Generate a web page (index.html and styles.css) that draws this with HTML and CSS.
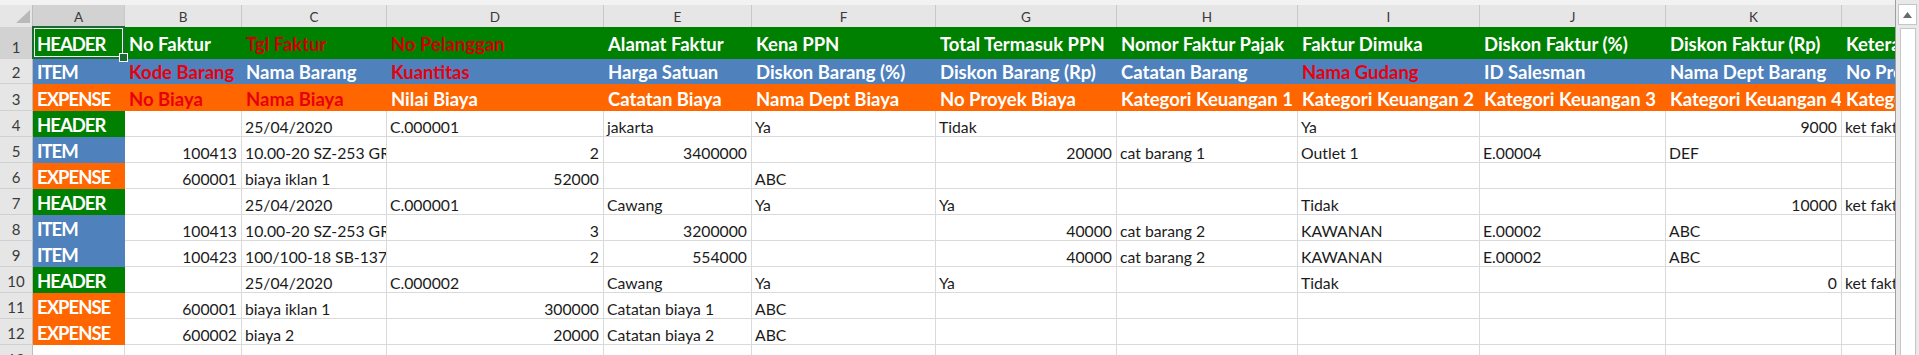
FILE: index.html
```html
<!DOCTYPE html>
<html lang="id">
<head>
<meta charset="utf-8">
<title>Sheet</title>
<link rel="stylesheet" href="styles.css">
</head>
<body>
<div class="app">
  <div class="sheet">
    <div class="strip"></div>
    <div class="row row-head">
      <div class="ch corner"><svg width="33" height="22" viewBox="0 0 33 22"><polygon points="30,4 30,17 16,17" fill="#b9b9b9"/></svg></div>
      <div class="ch ch-sel">A</div><div class="ch">B</div><div class="ch">C</div><div class="ch">D</div><div class="ch">E</div><div class="ch">F</div><div class="ch">G</div><div class="ch">H</div><div class="ch">I</div><div class="ch">J</div><div class="ch">K</div><div class="ch"></div>
    </div>

    <div class="row r1 fill fg">
      <div class="rh rh-sel">1</div>
      <div class="c sel tl">HEADER</div><div class="c">No Faktur</div><div class="c red-g">Tgl Faktur</div><div class="c red-g">No Pelanggan</div><div class="c">Alamat Faktur</div><div class="c">Kena PPN</div><div class="c">Total Termasuk PPN</div><div class="c">Nomor Faktur Pajak</div><div class="c">Faktur Dimuka</div><div class="c">Diskon Faktur (%)</div><div class="c">Diskon Faktur (Rp)</div><div class="c">Keterangan</div>
    </div>
    <div class="row r2 fill fb">
      <div class="rh">2</div>
      <div class="c tl">ITEM</div><div class="c red">Kode Barang</div><div class="c">Nama Barang</div><div class="c red">Kuantitas</div><div class="c">Harga Satuan</div><div class="c">Diskon Barang (%)</div><div class="c">Diskon Barang (Rp)</div><div class="c">Catatan Barang</div><div class="c red">Nama Gudang</div><div class="c">ID Salesman</div><div class="c">Nama Dept Barang</div><div class="c">No Proyek Barang</div>
    </div>
    <div class="row r3 fill fo">
      <div class="rh">3</div>
      <div class="c tl">EXPENSE</div><div class="c red">No Biaya</div><div class="c red">Nama Biaya</div><div class="c">Nilai Biaya</div><div class="c">Catatan Biaya</div><div class="c">Nama Dept Biaya</div><div class="c">No Proyek Biaya</div><div class="c">Kategori Keuangan 1</div><div class="c">Kategori Keuangan 2</div><div class="c">Kategori Keuangan 3</div><div class="c">Kategori Keuangan 4</div><div class="c">Kategori Keuangan 5</div>
    </div>

    <div class="row rd">
      <div class="rh">4</div>
      <div class="c a g">HEADER</div><div class="c"></div><div class="c">25/04/2020</div><div class="c">C.000001</div><div class="c">jakarta</div><div class="c">Ya</div><div class="c">Tidak</div><div class="c"></div><div class="c">Ya</div><div class="c"></div><div class="c n">9000</div><div class="c">ket faktur 1</div>
    </div>
    <div class="row rd">
      <div class="rh">5</div>
      <div class="c a b">ITEM</div><div class="c n">100413</div><div class="c">10.00-20 SZ-253 GRADE A</div><div class="c n">2</div><div class="c n">3400000</div><div class="c"></div><div class="c n">20000</div><div class="c">cat barang 1</div><div class="c">Outlet 1</div><div class="c">E.00004</div><div class="c">DEF</div><div class="c"></div>
    </div>
    <div class="row rd">
      <div class="rh">6</div>
      <div class="c a o">EXPENSE</div><div class="c n">600001</div><div class="c">biaya iklan 1</div><div class="c n">52000</div><div class="c"></div><div class="c">ABC</div><div class="c"></div><div class="c"></div><div class="c"></div><div class="c"></div><div class="c"></div><div class="c"></div>
    </div>
    <div class="row rd">
      <div class="rh">7</div>
      <div class="c a g">HEADER</div><div class="c"></div><div class="c">25/04/2020</div><div class="c">C.000001</div><div class="c">Cawang</div><div class="c">Ya</div><div class="c">Ya</div><div class="c"></div><div class="c">Tidak</div><div class="c"></div><div class="c n">10000</div><div class="c">ket faktur 2</div>
    </div>
    <div class="row rd">
      <div class="rh">8</div>
      <div class="c a b">ITEM</div><div class="c n">100413</div><div class="c">10.00-20 SZ-253 GRADE A</div><div class="c n">3</div><div class="c n">3200000</div><div class="c"></div><div class="c n">40000</div><div class="c">cat barang 2</div><div class="c">KAWANAN</div><div class="c">E.00002</div><div class="c">ABC</div><div class="c"></div>
    </div>
    <div class="row rd">
      <div class="rh">9</div>
      <div class="c a b">ITEM</div><div class="c n">100423</div><div class="c">100/100-18 SB-137 AB</div><div class="c n">2</div><div class="c n">554000</div><div class="c"></div><div class="c n">40000</div><div class="c">cat barang 2</div><div class="c">KAWANAN</div><div class="c">E.00002</div><div class="c">ABC</div><div class="c"></div>
    </div>
    <div class="row rd">
      <div class="rh">10</div>
      <div class="c a g">HEADER</div><div class="c"></div><div class="c">25/04/2020</div><div class="c">C.000002</div><div class="c">Cawang</div><div class="c">Ya</div><div class="c">Ya</div><div class="c"></div><div class="c">Tidak</div><div class="c"></div><div class="c n">0</div><div class="c">ket faktur 3</div>
    </div>
    <div class="row rd">
      <div class="rh">11</div>
      <div class="c a o">EXPENSE</div><div class="c n">600001</div><div class="c">biaya iklan 1</div><div class="c n">300000</div><div class="c">Catatan biaya 1</div><div class="c">ABC</div><div class="c"></div><div class="c"></div><div class="c"></div><div class="c"></div><div class="c"></div><div class="c"></div>
    </div>
    <div class="row rd">
      <div class="rh">12</div>
      <div class="c a o">EXPENSE</div><div class="c n">600002</div><div class="c">biaya 2</div><div class="c n">20000</div><div class="c">Catatan biaya 2</div><div class="c">ABC</div><div class="c"></div><div class="c"></div><div class="c"></div><div class="c"></div><div class="c"></div><div class="c"></div>
    </div>
    <div class="row rd">
      <div class="rh">13</div>
      <div class="c"></div><div class="c"></div><div class="c"></div><div class="c"></div><div class="c"></div><div class="c"></div><div class="c"></div><div class="c"></div><div class="c"></div><div class="c"></div><div class="c"></div><div class="c"></div>
    </div>
  </div>
  <div class="vscroll">
    <div class="up"><svg width="9" height="6" viewBox="0 0 9 6"><polygon points="4.5,0 9,6 0,6" fill="#6a6a6a"/></svg></div>
    <div class="thumb"></div>
  </div>
</div>
</body>
</html>
```
FILE: styles.css
```css
* { box-sizing: border-box; margin: 0; padding: 0; }
html, body { width: 1919px; height: 355px; overflow: hidden; background: #ffffff; }
body { font-family: Lato, "Liberation Sans", sans-serif; color: #1b1b1b; }

.app { display: flex; height: 355px; }
.sheet { width: 1895px; display: flex; flex-direction: column; overflow: hidden; flex: none; }
.strip { height: 5px; background: #f2f2f2; flex: none; }

.row {
  display: grid;
  grid-template-columns: 33px 92px 117px 145px 217px 148px 184px 181px 181px 182px 186px 176px 53px;
  flex: none;
}
.row-head { height: 22px; }
.r1 { height: 32px; }
.r2 { height: 25px; }
.r3 { height: 27px; }
.rd { height: 26px; }

/* column headers */
.ch {
  display: flex; align-items: center; justify-content: center;
  background: #e6e6e6; color: #3a3a3a;
  border-right: 1px solid #c9c9c9; border-bottom: 1px solid #ababab;
  font-size: 13.5px; line-height: 16px; padding-top: 1px;
}
.ch:last-child { border-right: none; }
.ch-sel { background: #d2d2d2; }
.corner { display: block; border-right: 1px solid #bdbdbd; }
.corner svg { display: block; }

/* row headers */
.rh {
  display: flex; align-items: flex-end; justify-content: center;
  background: #e6e6e6; color: #3a3a3a;
  border-right: 1px solid #bdbdbd; border-bottom: 1px solid #d0d0d0;
  font-size: 15px; line-height: 18px; padding-bottom: 2px;
}
.rh-sel { background: #d2d2d2; }

/* cells */
.c {
  display: flex; align-items: flex-end; justify-content: flex-start;
  padding: 0 3px; white-space: nowrap; overflow: hidden;
  border-right: 1px solid #dadada; border-bottom: 1px solid #dadada;
  font-size: 15.75px; line-height: 18px;
}
.row > .c:last-child { border-right: none; }
.c.n { justify-content: flex-end; padding-right: 4px; }

/* filled header rows */
.fill .c {
  border-color: transparent; color: #ffffff;
  font-weight: 700; font-size: 18.5px; line-height: 22px; padding-left: 4px;
}
.fg { background: #008000; }
.fb { background: #4f81bd; }
.fo { background: #ff6600; }
.r1 .c { padding-bottom: 3px; }
.fill .c.red { color: #e8000e; }
.fill .c.red-g { color: #d00000; }
.fill .c.tl { letter-spacing: -1px; }

/* type column (A) */
.c.a { color: #ffffff; font-weight: 700; font-size: 18.5px; line-height: 22px; padding-left: 4px; letter-spacing: -1px; }
.c.g { background: #008000; border-color: #008000; }
.c.b { background: #4f81bd; border-color: #4f81bd; }
.c.o { background: #ff6600; border-color: #ff6600; }

/* active cell */
.c.sel { position: relative; overflow: visible; }
.c.sel::after {
  content: ""; position: absolute; left: -1px; top: -1px; right: -1px; bottom: -1px;
  border: 2px solid #1b6a33; box-shadow: inset 0 0 0 1px #e9f2ea;
}
.c.sel::before {
  content: ""; position: absolute; right: -4px; bottom: -4px; width: 7px; height: 7px;
  background: #1b6a33; border: 1px solid #ffffff; z-index: 2;
}

/* vertical scrollbar */
.vscroll {
  width: 24px; flex: none; background: #e9e9e9; border-left: 1px solid #9f9f9f;
  display: flex; flex-direction: column; align-items: center; padding-top: 4px; gap: 3px;
}
.up {
  width: 19px; height: 21px; background: #ffffff; border: 1px solid #c6c6c6;
  display: flex; align-items: center; justify-content: center; flex: none;
}
.up svg { display: block; }
.thumb { width: 16px; flex: 1; background: #ffffff; border: 1px solid #c6c6c6; border-bottom: none; }
```
